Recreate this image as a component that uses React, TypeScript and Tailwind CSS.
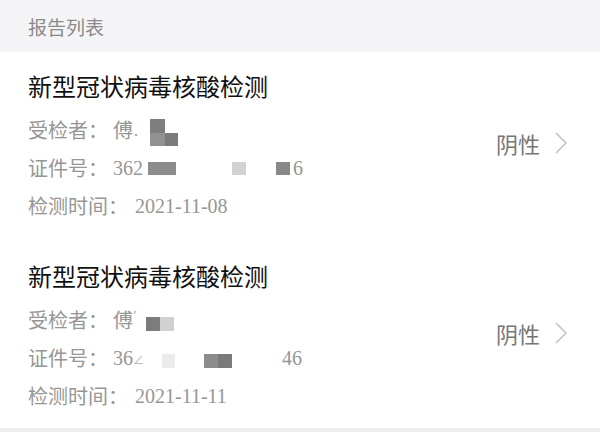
import React from "react";

const cjk = "font-['Noto_Sans_CJK_SC','Noto_Sans',sans-serif]";
const serif = "font-['Liberation_Serif','Noto_Sans_CJK_SC',serif]";

function Chevron() {
  return (
    <svg width="14" height="24" viewBox="0 0 14 24" className="ml-[14px]">
      <polyline points="2,2 12,12 2,22" fill="none" stroke="#c4c4c4" strokeWidth="1.6" />
    </svg>
  );
}

function Row({ label, children }: { label: string; children: React.ReactNode }) {
  return (
    <div className="h-[38px] flex items-center text-[20px] text-[#969696]">
      <span className="leading-none">{label}</span>
      <div className="ml-[5px] flex items-center h-full">{children}</div>
    </div>
  );
}

function Card({ rows, pt, pb }: { rows: React.ReactNode; pt: string; pb: string }) {
  return (
    <div className={`flex pl-[28px] pr-[32px] ${pt} ${pb}`}>
      <div className="flex-1 flex flex-col">
        <div className="h-[32px] flex items-center text-[24px] text-[#111111] leading-none">
          新型冠状病毒核酸检测
        </div>
        <div className="mt-[9px] flex flex-col">{rows}</div>
      </div>
      <div className="flex items-center mt-[-10px]">
        <span className="text-[22px] text-[#767676] leading-none">阴性</span>
        <Chevron />
      </div>
    </div>
  );
}

export default function App() {
  return (
    <div className={`w-[600px] h-[432px] bg-white overflow-hidden ${cjk}`}>
      <div className="h-[52px] bg-[#f4f4f6] flex items-center pl-[28px]">
        <span className="text-[19px] text-[#8a8a8a] leading-none">报告列表</span>
      </div>
      <Card
        pt="pt-[18px]"
        pb="pb-[17px]"
        rows={
          <>
            <Row label="受检者：">
              <span className="leading-none">傅</span>
              <span className="leading-none text-[14px] ml-[1px] self-end mb-[12px]">.</span>
              <div className="ml-[12px] mt-[4px] grid grid-cols-[15px_13px] grid-rows-[14px_13px]">
                <div className="bg-[#7e7e7e]" />
                <div className="bg-white" />
                <div className="bg-[#919191]" />
                <div className="bg-[#7a7a7a]" />
              </div>
            </Row>
            <Row label="证件号：">
              <span className={`${serif} text-[20px] leading-none`}>362</span>
              <div className="ml-[5px] w-[28px] h-[13px] bg-[#8c8c8c]" />
              <div className="ml-[56px] w-[14px] h-[13px] bg-[#d2d2d2]" />
              <div className="ml-[30px] w-[14px] h-[13px] bg-[#888888]" />
              <span className={`${serif} ml-[3px] text-[20px] leading-none`}>6</span>
            </Row>
            <Row label="检测时间：">
              <span className={`${serif} ml-[2px] text-[20px] leading-none`}>2021-11-08</span>
            </Row>
          </>
        }
      />
      <Card
        pt="pt-[18px]"
        pb="pb-[13px]"
        rows={
          <>
            <Row label="受检者：">
              <span className="leading-none">傅</span>
              <span className="leading-none text-[12px] self-start mt-[8px]">′</span>
              <div className="ml-[10px] mt-[8px] flex">
                <div className="w-[14px] h-[14px] bg-[#7c7c7c]" />
                <div className="w-[14px] h-[14px] bg-[#d0d0d0]" />
              </div>
            </Row>
            <Row label="证件号：">
              <span className={`${serif} text-[20px] leading-none`}>36</span>
              <span className="text-[11px] leading-none self-end mb-[12px] text-[#b0b0b0]">∠</span>
              <div className="ml-[18px] mt-[6px] w-[13px] h-[14px] bg-[#ececec]" />
              <div className="ml-[29px] mt-[6px] flex">
                <div className="w-[14px] h-[14px] bg-[#8c8c8c]" />
                <div className="w-[14px] h-[14px] bg-[#7a7a7a]" />
              </div>
              <span className={`${serif} ml-[50px] text-[20px] leading-none`}>46</span>
            </Row>
            <Row label="检测时间：">
              <span className={`${serif} ml-[2px] text-[20px] leading-none`}>2021-11-11</span>
            </Row>
          </>
        }
      />
      <div className="h-[4px] bg-[#ededed]" />
    </div>
  );
}
